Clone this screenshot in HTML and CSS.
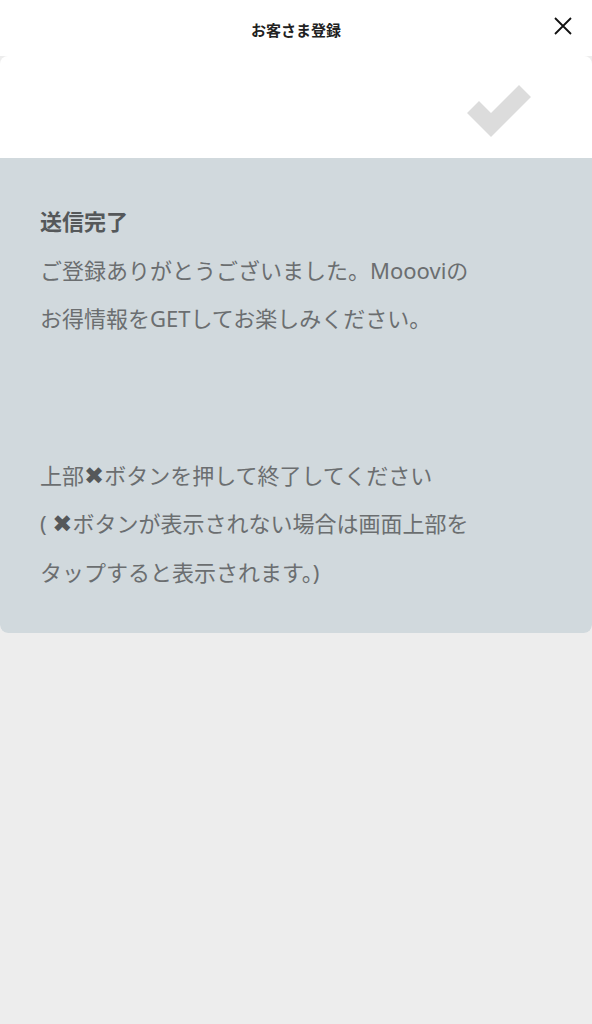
FILE: index.html
```html
<!DOCTYPE html>
<html lang="ja">
<head>
<meta charset="utf-8">
<link rel="stylesheet" href="styles.css">
</head>
<body>
<header class="topbar">
  <h1 class="title">お客さま登録</h1>
  <button class="close" aria-label="閉じる">
    <svg width="18" height="18" viewBox="0 0 18 18"><path d="M1 1 L17 17 M17 1 L1 17" stroke="#111" stroke-width="1.8" fill="none"/></svg>
  </button>
</header>
<main class="card">
  <div class="card-top">
    <svg class="check" width="66" height="54" viewBox="0 0 66 54">
      <path d="M0 29 L12 17 L24 29 L52 1 L64 13 L24 53 Z" fill="#dcdcdc"/>
    </svg>
  </div>
  <section class="panel">
    <p class="msg"><strong class="head">送信完了</strong><br>ご登録ありがとうございました。<span class="latin">Mooovi</span>の<br>お得情報を<span class="latin">GET</span>してお楽しみください。</p>
    <p class="msg second">上部<span class="x">✖</span>ボタンを押して終了してください<br><span class="latin">( </span><span class="x">✖</span>ボタンが表示されない場合は画面上部を<br>タップすると表示されます。<span class="latin">)</span></p>
  </section>
</main>
</body>
</html>
```
FILE: styles.css
```css
html, body {
  margin: 0;
  padding: 0;
}
body {
  width: 592px;
  min-height: 1024px;
  background: #ededed;
  font-family: "Noto Sans CJK JP", sans-serif;
}
.topbar {
  height: 56px;
  background: #ffffff;
  display: flex;
  align-items: center;
  justify-content: center;
  position: relative;
}
.title {
  margin: 0;
  font-size: 15px;
  font-weight: 700;
  color: #222;
  line-height: 1;
  position: relative;
  top: 1px;
}
.close {
  position: absolute;
  right: 20px;
  top: 17px;
  border: 0;
  background: none;
  padding: 0;
  width: 18px;
  height: 18px;
}
.close svg { display: block; }
.card {
  border-radius: 8px;
  overflow: hidden;
}
.card-top {
  background: #ffffff;
  height: 102px;
  display: flex;
  justify-content: flex-end;
  align-items: flex-start;
  padding-right: 59px;
  box-sizing: border-box;
}
.check {
  margin-top: 28px;
}
.panel {
  background: #d1d9dd;
  padding: 38px 40px 38px;
  border-radius: 0 0 8px 8px;
}
.msg {
  margin: 0;
  font-size: 22px;
  line-height: 48.5px;
  color: #6b6e70;
}
.head {
  font-weight: 700;
  font-size: 22px;
  color: #55585a;
}
.latin {
  font-family: "Noto Sans", sans-serif;
  line-height: 1;
}
.x {
  font-family: "DejaVu Sans", sans-serif;
  font-size: 24px;
  line-height: 1;
  color: #55585a;
}
.second {
  margin-top: 108px;
}
```
